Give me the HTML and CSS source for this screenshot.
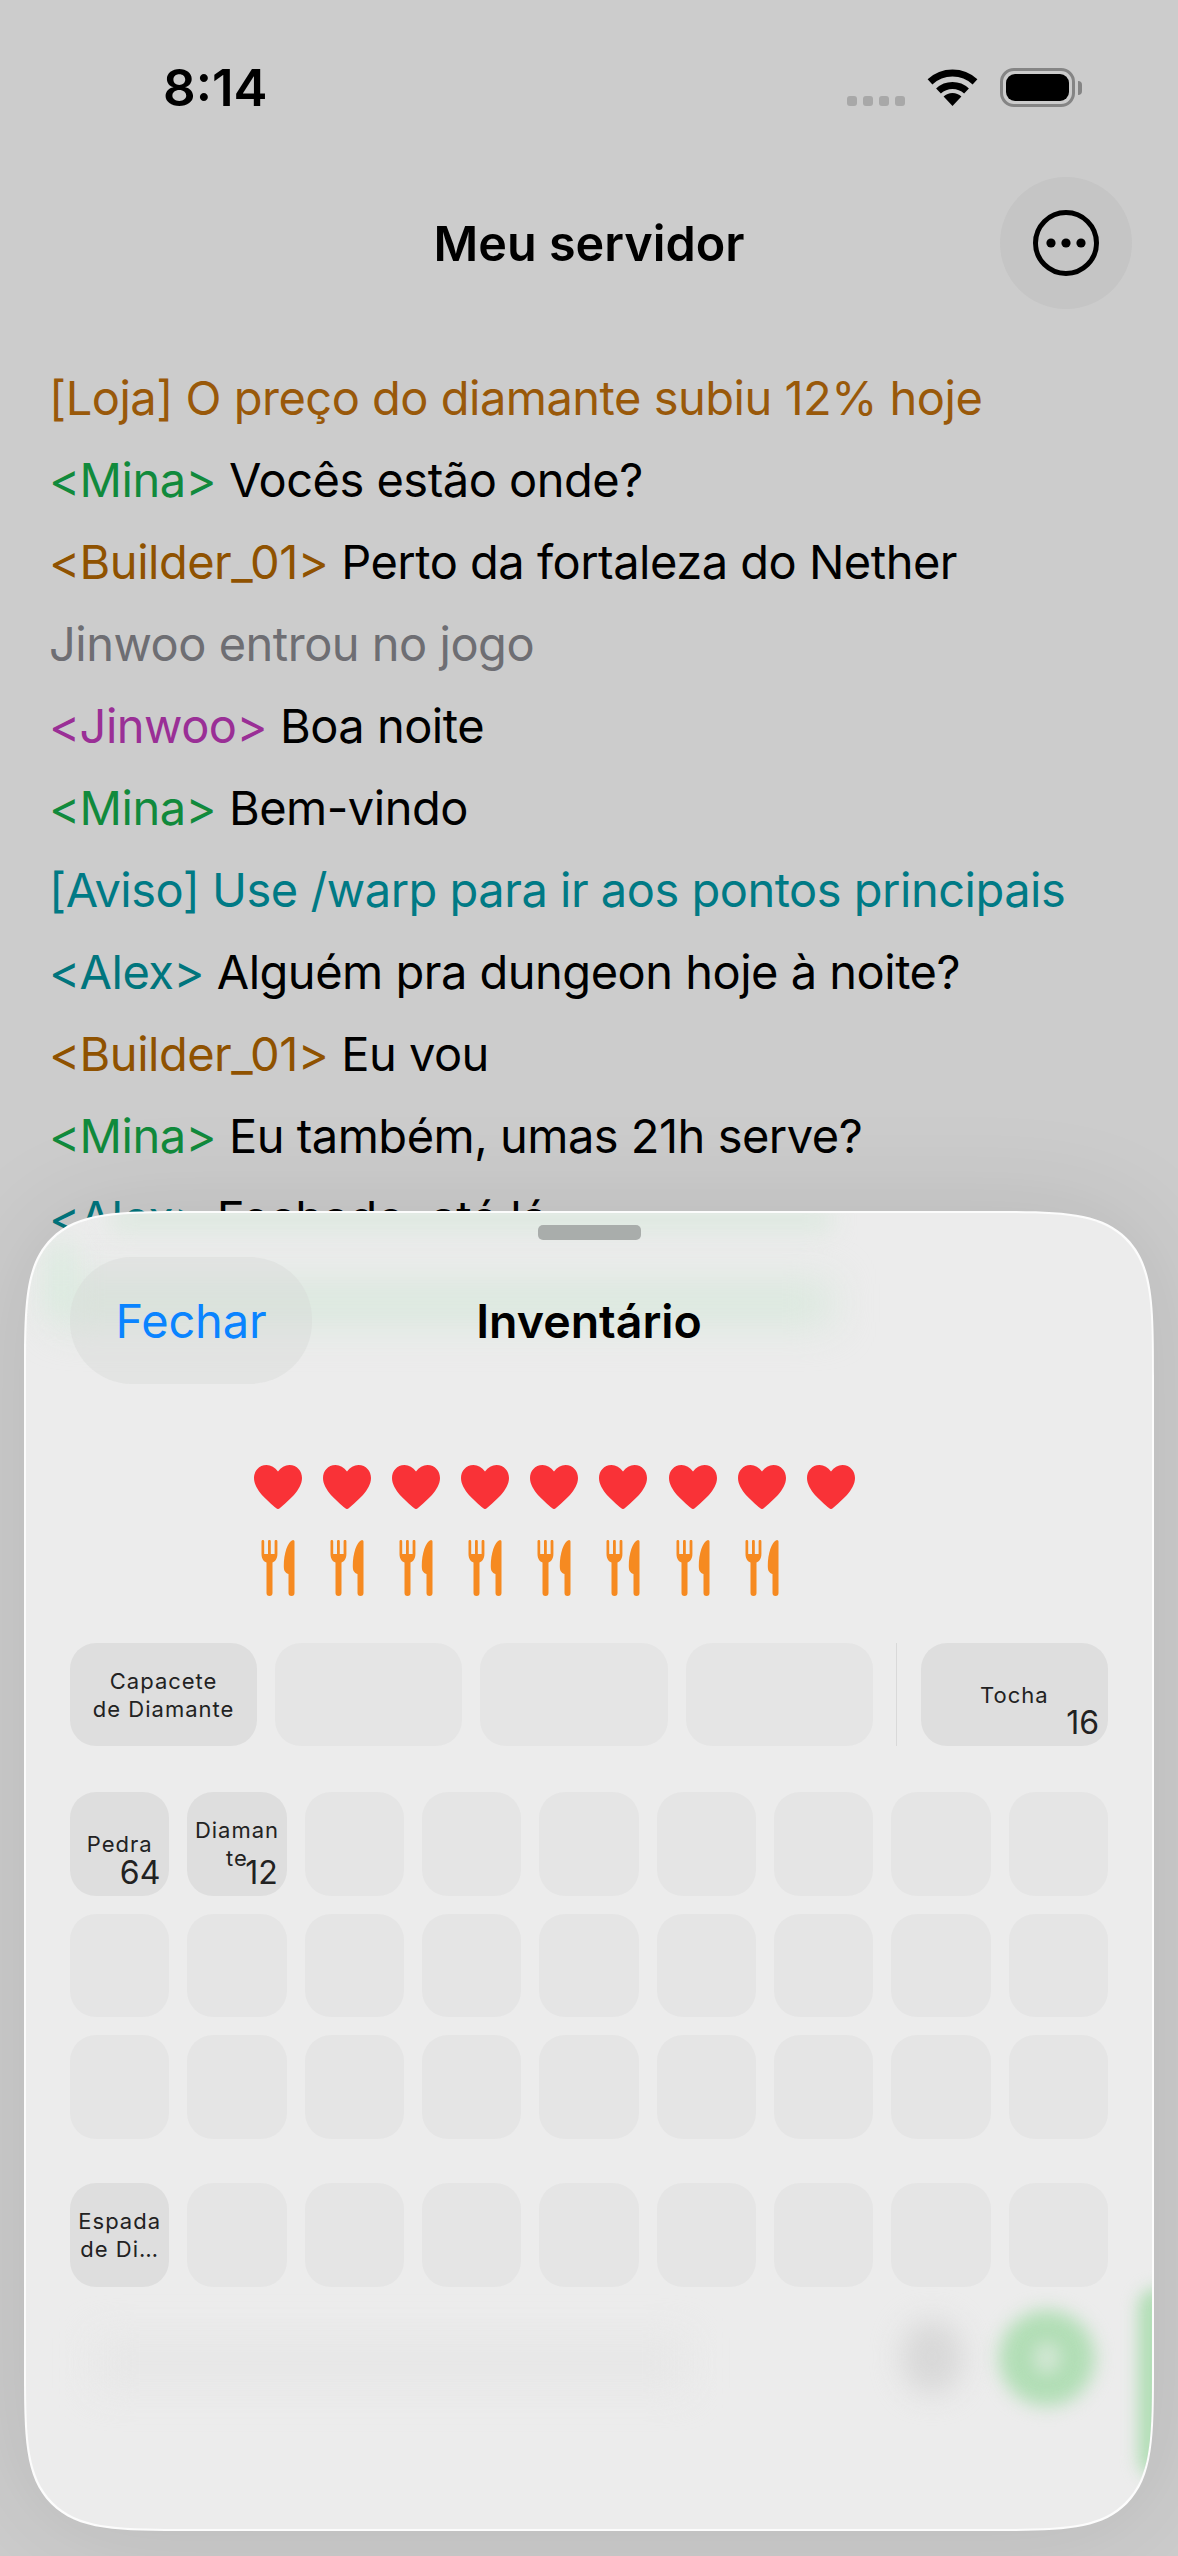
FILE: index.html
```html
<!DOCTYPE html>
<html lang="pt">
<head>
    <meta charset="UTF-8">
    <meta name="viewport" content="width=device-width, initial-scale=1.0">
    <title>Meu servidor</title>
    <link rel="stylesheet" href="styles.css">
</head>
<body>
    <svg class="sprites" width="0" height="0">
        <symbol id="heart" viewBox="0 0 48 44">
            <path d="M24 6.5C21 2.3 17 0 12.5 0 5 0 0 6 0 13c0 12 14 23 22 30 1.200 1.200 2.800 1.200 4 0 8-7 22-18 22-30 0-7-5-13-12.500-13C31 0 27 2.300 24 6.500Z"/>
        </symbol>
        <symbol id="food" viewBox="0 0 33 56">
            <path d="M0 1.300A1.300 1.300 0 0 1 2.700 1.300V14H6.500V1.300A1.400 1.400 0 0 1 9.300 1.300V14H13.100V1.300A1.300 1.300 0 0 1 15.900 1.300V14C15.900 19 13.500 21.500 11 22.500V53A3 3 0 0 1 5 53V22.500C2.300 21.500 0 19 0 14Z"/>
            <path d="M31.500 0C32.400 0 33 .8 33 1.800V53A3 3 0 0 1 27 53V34C23 32.500 22.300 30 22.300 26 22.300 14 26 1.500 31.500 0Z"/>
        </symbol>
    </svg>

    <header class="status-bar">
        <span class="clock">8:14</span>
        <div class="status-icons">
            <div class="signal"><i></i><i></i><i></i><i></i></div>
            <svg class="wifi" viewBox="0 0 51 37">
                <path d="M3 12.900A33 33 0 0 1 48 12.900M11.500 22A20.500 20.500 0 0 1 39.500 22" fill="none" stroke="#000" stroke-width="7"/>
                <path d="M25.500 37 16.600 27.500A13 13 0 0 1 34.400 27.500Z"/>
            </svg>
            <div class="battery"><div class="battery-level"></div></div>
            <div class="battery-cap"></div>
        </div>
    </header>

    <nav class="nav-bar">
        <h1 class="nav-title">Meu servidor</h1>
        <button class="more-button">
            <svg viewBox="0 0 66 66" width="66" height="66">
                <circle cx="33" cy="33" r="30.500" fill="none" stroke="#000" stroke-width="5"/>
                <circle cx="18" cy="33" r="4.600"/>
                <circle cx="33" cy="33" r="4.600"/>
                <circle cx="48" cy="33" r="4.600"/>
            </svg>
        </button>
    </nav>

    <main class="chat">
        <p class="shop">[Loja] O preço do diamante subiu 12% hoje</p>
        <p><span class="mina">&lt;Mina&gt;</span> Vocês estão onde?</p>
        <p><span class="builder">&lt;Builder_01&gt;</span> Perto da fortaleza do Nether</p>
        <p class="system">Jinwoo entrou no jogo</p>
        <p><span class="jinwoo">&lt;Jinwoo&gt;</span> Boa noite</p>
        <p><span class="mina">&lt;Mina&gt;</span> Bem-vindo</p>
        <p class="notice">[Aviso] Use /warp para ir aos pontos principais</p>
        <p><span class="alex">&lt;Alex&gt;</span> Alguém pra dungeon hoje à noite?</p>
        <p><span class="builder">&lt;Builder_01&gt;</span> Eu vou</p>
        <p><span class="mina">&lt;Mina&gt;</span> Eu também, umas 21h serve?</p>
        <p><span class="alex">&lt;Alex&gt;</span> Fechado, até lá</p>
    </main>

    <section class="sheet">
        <div class="smear smear-top"></div>
        <div class="smear smear-mid"></div>
        <div class="smear smear-left"></div>
        <div class="smear smear-input"></div>
        <div class="smear smear-mic"></div>
        <div class="smear smear-send"></div>
        <div class="smear smear-send-core"></div>
        <div class="smear smear-edge"></div>

        <div class="sheet-content">
            <div class="handle"></div>
            <div class="sheet-header">
                <button class="close-button">Fechar</button>
                <h2 class="sheet-title">Inventário</h2>
            </div>

            <div class="stat-row hearts">
                <svg><use href="#heart"/></svg><svg><use href="#heart"/></svg><svg><use href="#heart"/></svg>
                <svg><use href="#heart"/></svg><svg><use href="#heart"/></svg><svg><use href="#heart"/></svg>
                <svg><use href="#heart"/></svg><svg><use href="#heart"/></svg><svg><use href="#heart"/></svg>
            </div>
            <div class="stat-row food">
                <svg><use href="#food"/></svg><svg><use href="#food"/></svg><svg><use href="#food"/></svg>
                <svg><use href="#food"/></svg><svg><use href="#food"/></svg><svg><use href="#food"/></svg>
                <svg><use href="#food"/></svg><svg><use href="#food"/></svg>
            </div>

            <div class="equipment">
                <div class="slot filled">Capacete de&nbsp;Diamante</div>
                <div class="slot"></div>
                <div class="slot"></div>
                <div class="slot"></div>
                <div class="divider"></div>
                <div class="slot filled">Tocha<span class="count">16</span></div>
            </div>

            <div class="slot-grid backpack">
                <div class="slot filled">Pedra<span class="count">64</span></div>
                <div class="slot filled">Diamante<span class="count">12</span></div>
                <div class="slot"></div><div class="slot"></div><div class="slot"></div><div class="slot"></div><div class="slot"></div><div class="slot"></div><div class="slot"></div>
                <div class="slot"></div><div class="slot"></div><div class="slot"></div><div class="slot"></div><div class="slot"></div><div class="slot"></div><div class="slot"></div><div class="slot"></div><div class="slot"></div>
                <div class="slot"></div><div class="slot"></div><div class="slot"></div><div class="slot"></div><div class="slot"></div><div class="slot"></div><div class="slot"></div><div class="slot"></div><div class="slot"></div>
            </div>

            <div class="slot-grid hotbar">
                <div class="slot filled">Espada de&nbsp;Di…</div>
                <div class="slot"></div><div class="slot"></div><div class="slot"></div><div class="slot"></div><div class="slot"></div><div class="slot"></div><div class="slot"></div><div class="slot"></div>
            </div>
        </div>
    </section>
</body>
</html>
```

FILE: styles.css
```css
* {
    box-sizing: border-box;
}
body {
    font-family: Inter, "Liberation Sans", sans-serif;
    margin: 0;
    width: 1178px;
    height: 2556px;
    overflow: hidden;
    position: relative;
    background-color: #ccc;
    color: #000;
}
.sprites {
    position: absolute;
}
button {
    font-family: inherit;
    border: none;
    padding: 0;
}

/* status bar */
.status-bar {
    height: 177px;
    padding: 68px 96px 0 163px;
    display: flex;
    justify-content: space-between;
    align-items: flex-start;
}
.clock {
    font-size: 51px;
    font-weight: 600;
    line-height: 40px;
}
.status-icons {
    display: flex;
    align-items: flex-start;
}
.signal {
    display: flex;
    gap: 6px;
    margin-top: 28px;
    margin-right: 22px;
}
.signal i {
    width: 10px;
    height: 10px;
    border-radius: 3px;
    background-color: #a8a8a8;
}
.wifi {
    width: 51px;
    height: 37px;
    margin-top: 1px;
    margin-right: 22px;
}
.battery {
    width: 75px;
    height: 39px;
    padding: 3px;
    border: 3px solid #858585;
    border-radius: 14px;
}
.battery-level {
    height: 100%;
    background-color: #000;
    border-radius: 9px;
}
.battery-cap {
    width: 4px;
    height: 14px;
    margin: 13px 0 0 3px;
    background-color: #858585;
    border-radius: 0 4px 4px 0;
}

/* nav */
.nav-bar {
    height: 132px;
    padding-right: 46px;
    display: flex;
    align-items: center;
    justify-content: flex-end;
    position: relative;
}
.nav-title {
    position: absolute;
    left: 0;
    right: 0;
    margin: 0;
    text-align: center;
    font-size: 48.500px;
    font-weight: 600;
}
.more-button {
    width: 132px;
    height: 132px;
    border-radius: 50%;
    background-color: #c5c5c5;
    display: flex;
    align-items: center;
    justify-content: center;
}

/* chat */
.chat {
    padding: 48px 49px 0;
}
.chat p {
    margin: 0;
    height: 82px;
    line-height: 82px;
    font-size: 47px;
    letter-spacing: -0.5px;
    white-space: nowrap;
}
.shop { color: #99590a; }
.builder { color: #8f5200; }
.mina { color: #118a3c; }
.system { color: #6e6e73; }
.jinwoo { color: #9a2f96; }
.notice { color: #007a85; }
.alex { color: #00757d; }

/* inventory sheet */
.sheet {
    position: absolute;
    left: 24px;
    top: 1211px;
    width: 1130px;
    height: 1320px;
    background-color: #ececec;
    border: 2px solid rgba(255, 255, 255, 0.85);
    border-radius: 130px;
    box-shadow: 0 0 110px rgba(0, 0, 0, 0.1);
    overflow: hidden;
}
@supports (corner-shape: squircle) {
    .sheet {
        border-radius: 170px;
        corner-shape: squircle;
    }
}
.smear {
    position: absolute;
}
.smear-top {
    left: 85px;
    top: -2px;
    width: 720px;
    height: 18px;
    background-color: #d8e8dc;
    filter: blur(12px);
}
.smear-mid {
    left: 30px;
    top: 70px;
    width: 775px;
    height: 40px;
    background-color: #d8e8dc;
    filter: blur(20px);
}
.smear-left {
    left: 20px;
    top: 30px;
    width: 30px;
    height: 70px;
    background-color: #dcebe0;
    filter: blur(14px);
}
.smear-input {
    left: 70px;
    top: 1125px;
    width: 590px;
    height: 50px;
    background-color: #e7e7e7;
    filter: blur(18px);
}
.smear-mic {
    left: 875px;
    top: 1107px;
    width: 62px;
    height: 74px;
    border-radius: 50%;
    background-color: #d8d8d8;
    filter: blur(14px);
}
.smear-send {
    left: 973px;
    top: 1097px;
    width: 96px;
    height: 96px;
    border-radius: 50%;
    background-color: #b2deb6;
    filter: blur(9px);
}
.smear-send-core {
    left: 1007px;
    top: 1129px;
    width: 28px;
    height: 32px;
    border-radius: 50%;
    background-color: #d0e6d2;
    filter: blur(8px);
}
.smear-edge {
    left: 1112px;
    top: 1075px;
    width: 40px;
    height: 190px;
    border-radius: 20px;
    background-color: #b2deb6;
    filter: blur(8px);
}
.sheet-content {
    position: relative;
    padding: 12px 44px 0;
}
.handle {
    width: 103px;
    height: 15px;
    margin: 0 auto 17px;
    border-radius: 5px;
    background-color: #a9adab;
}
.sheet-header {
    height: 127px;
    display: flex;
    align-items: center;
    position: relative;
}
.close-button {
    width: 242px;
    height: 127px;
    border-radius: 62px;
    background-color: rgba(215, 218, 215, 0.42);
    color: #0a84ff;
    font-size: 47px;
    letter-spacing: -0.2px;
    text-align: center;
}
.sheet-title {
    position: absolute;
    left: 0;
    right: 0;
    margin: 0;
    text-align: center;
    font-size: 46.500px;
    font-weight: 600;
    pointer-events: none;
}
.stat-row {
    width: 671px;
    margin: 0 auto;
    display: flex;
    gap: 21.200px;
}
.stat-row svg {
    width: 48px;
}
.hearts {
    margin-top: 81px;
    fill: #f93237;
}
.hearts svg {
    height: 44px;
}
.food {
    margin-top: 31px;
    fill: #f68a21;
}
.food svg {
    height: 56px;
}
.equipment {
    margin-top: 47px;
    display: flex;
    gap: 18px;
}
.equipment .slot {
    flex: 1;
    height: 103px;
}
.divider {
    width: 1px;
    margin: 0 5.500px;
    background-color: #d9d9d9;
}
.slot-grid {
    display: grid;
    grid-template-columns: repeat(9, 1fr);
    gap: 18px;
}
.backpack {
    margin-top: 46px;
}
.hotbar {
    margin-top: 44.500px;
}
.slot {
    position: relative;
    height: 103.500px;
    min-width: 0;
    padding: 4px 5px;
    border-radius: 26px;
    background-color: #e5e5e5;
    display: flex;
    align-items: center;
    justify-content: center;
    text-align: center;
    font-size: 22px;
    line-height: 28px;
    letter-spacing: 1px;
    color: #222;
    overflow-wrap: anywhere;
}
.slot.filled {
    background-color: #dedede;
}
.count {
    position: absolute;
    right: 9px;
    bottom: 5px;
    font-size: 32px;
    line-height: 36px;
    letter-spacing: 0;
}
```
